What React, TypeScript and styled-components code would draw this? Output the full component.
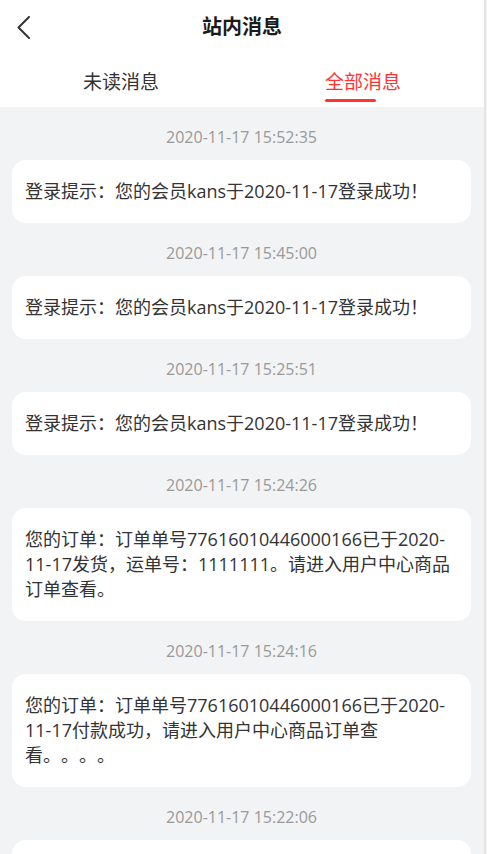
import React, { useState } from 'react';
import styled, { createGlobalStyle } from 'styled-components';

const GlobalStyle = createGlobalStyle`
  html, body {
    margin: 0;
    padding: 0;
    overflow: hidden;
    background: #f2f3f5;
  }
  body {
    font-family: 'Open Sans', 'Noto Sans CJK SC', sans-serif;
    text-spacing-trim: space-all;
  }
`;

const Shell = styled.div`
  display: flex;
  min-height: 100vh;
`;

const Page = styled.div`
  width: 484px;
  flex: none;
  background: #f2f3f5;
`;

const Gutter = styled.div`
  flex: 1;
  border-left: 2px solid #e4e4e4;
  background: #f3f3f3;
`;

const Header = styled.div`
  display: grid;
  grid-template-columns: 60px 1fr 60px;
  align-items: center;
  height: 54px;
  background: #fff;
`;

const BackButton = styled.button`
  background: none;
  border: none;
  padding: 0 0 0 17px;
  height: 54px;
  display: flex;
  align-items: center;
  cursor: pointer;
`;

const Title = styled.h1`
  margin: 0;
  text-align: center;
  font-size: 20px;
  font-weight: 700;
  color: #1a1a1a;
  line-height: 28px;
`;

const Tabs = styled.div`
  display: flex;
  height: 53px;
  background: #fff;
`;

const Tab = styled.button<{ $active: boolean }>`
  flex: 1;
  background: none;
  border: none;
  padding: 16px 0 0;
  display: flex;
  justify-content: center;
  align-items: flex-start;
  cursor: pointer;
  font-family: inherit;
  font-size: 19px;
  line-height: 24px;
  color: ${p => (p.$active ? '#ff3333' : '#333')};
`;

const TabLabel = styled.span`
  display: inline-flex;
  flex-direction: column;
  align-items: flex-start;
`;

const Underline = styled.span<{ $show: boolean }>`
  width: 51px;
  height: 3px;
  margin-top: 5px;
  border-radius: 2px;
  background: ${p => (p.$show ? '#ff3333' : 'transparent')};
`;

const List = styled.div`
  padding: 0 13px 20px 12px;
`;

const Item = styled.div`
  padding-top: 20px;
`;

const Time = styled.div`
  text-align: center;
  font-size: 16px;
  line-height: 20px;
  color: #999;
  margin-bottom: 13px;
`;

const Card = styled.div`
  background: #fff;
  border-radius: 14px;
  padding: 19px 13px;
  font-size: 18px;
  line-height: 25px;
  color: #333;
  text-spacing-trim: space-all;
`;

const messages = [
  { time: '2020-11-17 15:52:35', text: '登录提示：您的会员kans于2020-11-17登录成功！' },
  { time: '2020-11-17 15:45:00', text: '登录提示：您的会员kans于2020-11-17登录成功！' },
  { time: '2020-11-17 15:25:51', text: '登录提示：您的会员kans于2020-11-17登录成功！' },
  {
    time: '2020-11-17 15:24:26',
    text: '您的订单：订单单号77616010446000166已于2020-11-17发货，运单号：1111111。请进入用户中心商品订单查看。',
  },
  {
    time: '2020-11-17 15:24:16',
    text: '您的订单：订单单号77616010446000166已于2020-11-17付款成功，请进入用户中心商品订单查看。。。。',
  },
  { time: '2020-11-17 15:22:06', text: '登录提示：您的会员kans于2020-11-17登录成功！' },
  { time: '2020-11-17 15:20:41', text: '登录提示：您的会员kans于2020-11-17登录成功！' },
];

export default function App() {
  const [tab, setTab] = useState<'unread' | 'all'>('all');

  return (
    <>
      <GlobalStyle />
      <Shell>
        <Page>
          <Header>
            <BackButton aria-label="返回">
              <svg width="13" height="23" viewBox="0 0 13 23" fill="none">
                <polyline points="12,1 1.5,11.5 12,22" stroke="#333" strokeWidth="2" strokeLinecap="round" strokeLinejoin="round" />
              </svg>
            </BackButton>
            <Title>站内消息</Title>
            <span />
          </Header>
          <Tabs>
            <Tab $active={tab === 'unread'} onClick={() => setTab('unread')}>
              <TabLabel>
                未读消息
                <Underline $show={tab === 'unread'} />
              </TabLabel>
            </Tab>
            <Tab $active={tab === 'all'} onClick={() => setTab('all')}>
              <TabLabel>
                全部消息
                <Underline $show={tab === 'all'} />
              </TabLabel>
            </Tab>
          </Tabs>
          <List>
            {messages.map((m, i) => (
              <Item key={i}>
                <Time>{m.time}</Time>
                <Card>{m.text}</Card>
              </Item>
            ))}
          </List>
        </Page>
        <Gutter />
      </Shell>
    </>
  );
}
